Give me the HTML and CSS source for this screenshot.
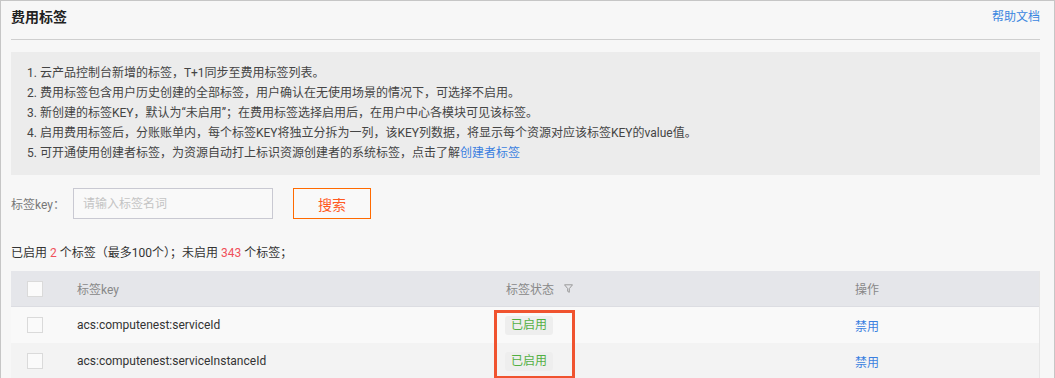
FILE: index.html
```html
<!DOCTYPE html>
<html lang="zh-CN">
<head>
<meta charset="utf-8">
<title>费用标签</title>
<link rel="stylesheet" href="styles.css">
</head>
<body>
<div class="frame">
  <div class="head">
    <h1 class="title">费用标签</h1>
    <a class="help">帮助文档</a>
  </div>
  <div class="info">
    <p>1. 云产品控制台新增的标签，T+1同步至费用标签列表。</p>
    <p>2. 费用标签包含用户历史创建的全部标签，用户确认在无使用场景的情况下，可选择不启用。</p>
    <p>3. 新创建的标签KEY，默认为“未启用”；在费用标签选择启用后，在用户中心各模块可见该标签。</p>
    <p>4. 启用费用标签后，分账账单内，每个标签KEY将独立分拆为一列，该KEY列数据，将显示每个资源对应该标签KEY的value值。</p>
    <p>5. 可开通使用创建者标签，为资源自动打上标识资源创建者的系统标签，点击了解<a class="link">创建者标签</a></p>
  </div>
  <div class="search">
    <label class="label">标签key：</label>
    <input class="input" type="text" placeholder="请输入标签名词">
    <button class="btn">搜索</button>
  </div>
  <div class="summary">已启用 <span class="num">2</span> 个标签（最多100个）；未启用 <span class="num">343</span> 个标签；</div>
  <div class="table">
    <div class="row thead">
      <div class="cell"><span class="check"></span></div>
      <div class="cell">标签key</div>
      <div class="cell">标签状态 <svg class="filter" width="9" height="9" viewBox="0 0 9 9"><path d="M0.5 0.8 H8.5 L5.3 4.6 V8.3 L3.7 7.4 V4.6 Z" fill="none" stroke="#9a9a9a" stroke-width="1"/></svg></div>
      <div class="cell">操作</div>
    </div>
    <div class="row r1">
      <div class="cell"><span class="check"></span></div>
      <div class="cell key">acs:computenest:serviceId</div>
      <div class="cell"><span class="badge">已启用</span></div>
      <div class="cell"><a class="link">禁用</a></div>
    </div>
    <div class="row r2">
      <div class="cell"><span class="check"></span></div>
      <div class="cell key">acs:computenest:serviceInstanceId</div>
      <div class="cell"><span class="badge">已启用</span></div>
      <div class="cell"><a class="link">禁用</a></div>
    </div>
  </div>
  <div class="mark"></div>
</div>
</body>
</html>
```
FILE: styles.css
```css
* { box-sizing: border-box; }
html, body { margin: 0; padding: 0; }
body {
  font-family: Roboto, "Noto Sans CJK SC", sans-serif;
  font-size: 12px;
  color: #333;
}
.frame {
  position: relative;
  width: 1055px;
  height: 378px;
  overflow: hidden;
  border: 1px solid #c6c6c6;
  border-bottom: none;
  background: #f7f7f7;
  padding: 0 14px 0 10px;
}
.head {
  display: flex;
  justify-content: space-between;
  align-items: center;
  height: 39px;
  border-bottom: 1px solid #cfcfcf;
  padding-bottom: 6px;
}
.title {
  margin: 0;
  font-size: 14px;
  font-weight: 700;
  color: #222;
  line-height: 20px;
}
.help {
  color: #3a86e0;
  font-size: 12px;
  line-height: 20px;
}
.info {
  margin-top: 12px;
  height: 123px;
  background: #ececec;
  padding: 11px 16px 0;
  color: #444;
}
.info p {
  margin: 0;
  line-height: 20px;
}
.link { color: #3a7fe0; cursor: pointer; }
.search {
  display: flex;
  align-items: center;
  margin-top: 13px;
  height: 31px;
}
.label {
  color: #777;
  width: 62px;
}
.input {
  width: 200px;
  height: 31px;
  border: 1px solid #c9c9d2;
  background: #f9f9f9;
  padding: 0 9px;
  font: inherit;
  font-size: 12px;
  outline: none;
}
.input::placeholder { color: #c4c4c4; }
.btn {
  margin-left: 20px;
  width: 78px;
  height: 31px;
  border: 1px solid #ff6a00;
  background: #f9f9f9;
  color: #ff5a1f;
  font: inherit;
  font-size: 14px;
  padding: 0;
}
.summary {
  margin-top: 24px;
  line-height: 20px;
  color: #333;
}
.num { color: #f0505a; }
.table {
  margin-top: 8px;
  border-right: 1px solid #e6e6e6;
}
.row {
  display: grid;
  grid-template-columns: 66px 429px 349px 1fr;
  align-items: center;
}
.thead {
  height: 36px;
  background: #e5e6ea;
  color: #888;
  border-bottom: 1px solid #dcdde2;
}
.r1 { height: 36px; background: #f9f9f9; }
.r2 { height: 36px; background: #f3f3f3; }
.cell { display: flex; align-items: center; }
.cell:first-child { padding-left: 16px; }
.check {
  display: block;
  width: 16px;
  height: 16px;
  border: 1px solid #dadada;
  background: #fafafa;
}
.thead .check { background: #fbfbfb; }
.filter { margin-left: 10px; }
.key { color: #333; }
.badge {
  margin-left: -1px;
  padding: 0 6px;
  height: 19px;
  line-height: 19px;
  border-radius: 3px;
  background: #eeeeee;
  color: #52b043;
}
.mark {
  position: absolute;
  left: 493px;
  top: 309px;
  width: 81px;
  height: 69px;
  border: 3px solid #f0532f;
}
```
